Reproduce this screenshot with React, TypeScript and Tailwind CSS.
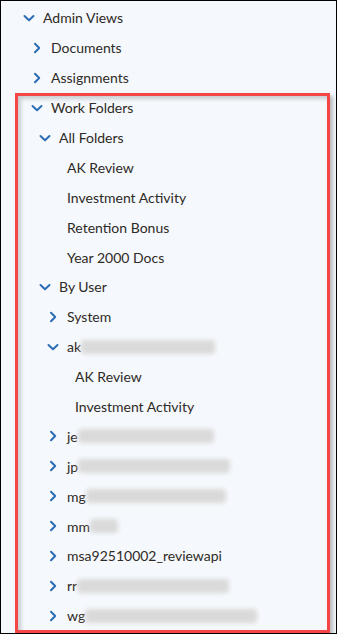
import React from "react";

type Node = {
  label: string;
  level: number;
  state: "open" | "closed" | "leaf";
  blur?: number;
};

const rows: Node[] = [
  { label: "Admin Views", level: 0, state: "open" },
  { label: "Documents", level: 1, state: "closed" },
  { label: "Assignments", level: 1, state: "closed" },
  { label: "Work Folders", level: 1, state: "open" },
  { label: "All Folders", level: 2, state: "open" },
  { label: "AK Review", level: 3, state: "leaf" },
  { label: "Investment Activity", level: 3, state: "leaf" },
  { label: "Retention Bonus", level: 3, state: "leaf" },
  { label: "Year 2000 Docs", level: 3, state: "leaf" },
  { label: "By User", level: 2, state: "open" },
  { label: "System", level: 3, state: "closed" },
  { label: "ak", level: 3, state: "open", blur: 134 },
  { label: "AK Review", level: 4, state: "leaf" },
  { label: "Investment Activity", level: 4, state: "leaf" },
  { label: "je", level: 3, state: "closed", blur: 136 },
  { label: "jp", level: 3, state: "closed", blur: 152 },
  { label: "mg", level: 3, state: "closed", blur: 140 },
  { label: "mm", level: 3, state: "closed", blur: 28 },
  { label: "msa92510002_reviewapi", level: 3, state: "closed" },
  { label: "rr", level: 3, state: "closed", blur: 152 },
  { label: "wg", level: 3, state: "closed", blur: 172 },
];

const pad: Record<number, string> = {
  0: "pl-[22px]",
  1: "pl-[30px]",
  2: "pl-[38px]",
  3: "pl-[46px]",
  4: "pl-[54px]",
};

function Chevron({ state }: { state: Node["state"] }) {
  if (state === "leaf") return <span className="w-[12px] h-[12px]" />;
  if (state === "open")
    return (
      <svg width="12" height="12" viewBox="0 0 12 12" className="shrink-0">
        <path
          d="M1.5 4 L6 8.2 L10.5 4"
          fill="none"
          stroke="#2b6cb5"
          strokeWidth="2"
          strokeLinecap="round"
          strokeLinejoin="round"
        />
      </svg>
    );
  return (
    <svg width="12" height="12" viewBox="0 0 12 12" className="shrink-0">
      <path
        d="M4 1.8 L8.2 6 L4 10.2"
        fill="none"
        stroke="#2b6cb5"
        strokeWidth="2"
        strokeLinecap="round"
        strokeLinejoin="round"
      />
    </svg>
  );
}

export default function App() {
  return (
    <div className="w-[338px] h-[634px] bg-white relative overflow-hidden">
      <div
        className="w-[337px] h-[634px] border border-black bg-[#f5f8fc] pt-[2px]"
        style={{ fontFamily: "Lato, 'Noto Sans', sans-serif" }}
      >
        <div className="flex flex-col">
          {rows.map((r, i) => (
            <div
              key={i}
              className={`flex items-center h-[29.9px] gap-[8px] text-[14px] text-[#2e2a26] ${pad[r.level]}`}
            >
              <Chevron state={r.state} />
              <span className="flex items-center whitespace-nowrap">
                {r.label}
                {r.blur ? (
                  <span
                    className="inline-block h-[14px] bg-[#dadada] blur-[2px] rounded-sm"
                    style={{ width: r.blur }}
                  />
                ) : null}
              </span>
            </div>
          ))}
        </div>
      </div>
      <div className="absolute left-[15px] top-[93px] w-[315px] h-[540px] border-[3px] border-[#f54545] shadow-[3px_3px_4px_rgba(0,0,0,0.25),inset_3px_3px_4px_rgba(0,0,0,0.18)] pointer-events-none" />
    </div>
  );
}
